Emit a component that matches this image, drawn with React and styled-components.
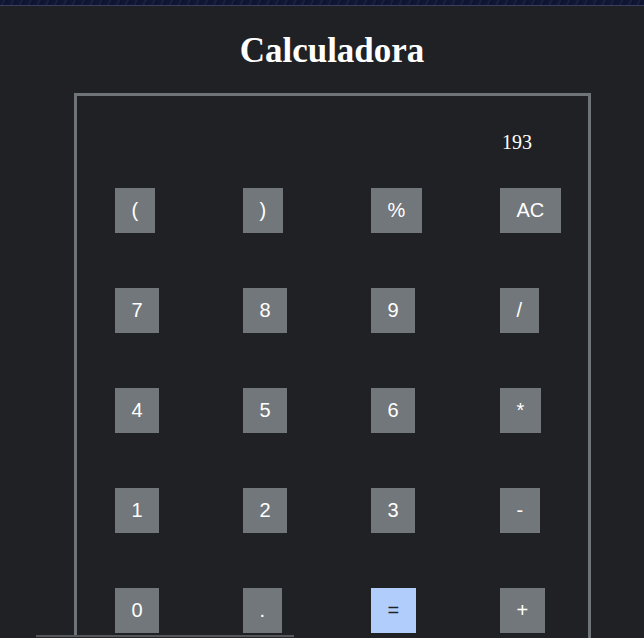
import React from "react";
import styled, { createGlobalStyle } from "styled-components";

const Global = createGlobalStyle`
  html, body { margin: 0; padding: 0; background: #202124; }
  body { font-family: "Liberation Serif", "Times New Roman", serif; color: #fff; overflow: hidden; }
`;

const Page = styled.div`
  position: relative;
  width: 644px;
  height: 638px;
  overflow: hidden;
  background: #202124;
`;

const TopBand = styled.div`
  height: 5px;
  background: repeating-linear-gradient(115deg, #111733 0 3px, #18203f 3px 5px, #0f1430 5px 8px);
  border-bottom: 1px solid #3b3e60;
`;

const Title = styled.h1`
  margin: 0;
  padding: 25px 0 0 20px;
  height: 62px;
  box-sizing: content-box;
  text-align: center;
  font-family: "Liberation Serif", "Times New Roman", serif;
  font-weight: 700;
  font-size: 35px;
  line-height: 40px;
  color: #fff;
`;

const Box = styled.div`
  margin-left: 74px;
  width: 473px;
  border: 3px solid #6f7478;
  border-bottom: none;
  padding: 35px 0 0 38px;
  box-sizing: content-box;
  height: 600px;
`;

const Grid = styled.div`
  display: grid;
  grid-template-columns: 128px 128px 129px 1fr;
  row-gap: 55px;
  align-items: start;
  justify-items: start;
`;

const Display = styled.div`
  grid-column: 4;
  padding-left: 2px;
  font-family: "Liberation Serif", "Times New Roman", serif;
  font-size: 20px;
  line-height: 23px;
  color: #fff;
  margin-bottom: -21px;
`;

const Key = styled.button`
  height: 45px;
  padding: 0 16.5px;
  border: none;
  border-radius: 0;
  background: ${(p) => (p.$primary ? "#b1cdfb" : "#72777b")};
  color: ${(p) => (p.$primary ? "#1f2328" : "#ffffff")};
  font-family: "Liberation Sans", Arial, sans-serif;
  font-size: 20px;
  line-height: 23px;
  cursor: pointer;
`;

const BottomStrip = styled.div`
  position: absolute;
  left: 36px;
  top: 635px;
  width: 258px;
  height: 4px;
  border-top: 2px solid #55575b;
  background: #26272b;
`;

const keys = [
  "(", ")", "%", "AC",
  "7", "8", "9", "/",
  "4", "5", "6", "*",
  "1", "2", "3", "-",
  "0", ".", "=", "+",
];

export default function App() {
  return (
    <Page>
      <Global />
      <TopBand />
      <Title>Calculadora</Title>
      <Box>
        <Grid>
          <Display>193</Display>
          {keys.map((k) => (
            <Key key={k} $primary={k === "="}>
              {k}
            </Key>
          ))}
        </Grid>
      </Box>
      <BottomStrip />
    </Page>
  );
}
